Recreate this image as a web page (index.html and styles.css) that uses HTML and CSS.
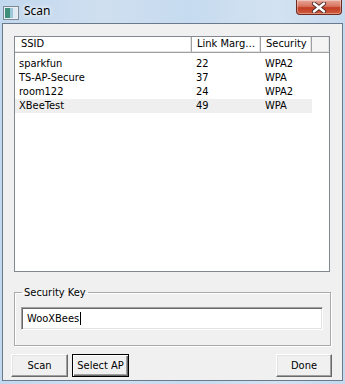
FILE: index.html
```html
<!DOCTYPE html>
<html>
<head>
<meta charset="utf-8">
<link rel="stylesheet" href="styles.css">
</head>
<body>
<div class="window">
  <div class="titlebar">
    <svg class="app-icon" width="16" height="14" viewBox="0 0 16 14">
      <rect x="0.5" y="0.5" width="15" height="13" fill="#e8eef4" stroke="#7d8a96"/>
      <rect x="2" y="2" width="5" height="10" fill="#3f8f7a"/>
      <rect x="7" y="2" width="3" height="10" fill="#9cc7d8"/>
      <rect x="10" y="2" width="4" height="10" fill="#dfe9f2"/>
    </svg>
    <span class="title">Scan</span>
    <div class="close">
      <svg width="16" height="11" viewBox="0 0 16 11">
        <path d="M3 1.5 L13 9.5 M13 1.5 L3 9.5" stroke="#4a2a26" stroke-width="4.2" stroke-linecap="round"/>
        <path d="M3 1.5 L13 9.5 M13 1.5 L3 9.5" stroke="#ffffff" stroke-width="2.4" stroke-linecap="round"/>
      </svg>
    </div>
  </div>
  <div class="client">
    <div class="list">
      <div class="row header">
        <div class="hcell c1">SSID</div>
        <div class="hcell c2">Link Marg…</div>
        <div class="hcell c3">Security</div>
        <div class="hcell c4"></div>
      </div>
      <div class="rows">
        <div class="row item"><span class="cell c1">sparkfun</span><span class="cell c2">22</span><span class="cell c3">WPA2</span></div>
        <div class="row item"><span class="cell c1">TS-AP-Secure</span><span class="cell c2">37</span><span class="cell c3">WPA</span></div>
        <div class="row item"><span class="cell c1">room122</span><span class="cell c2">24</span><span class="cell c3">WPA2</span></div>
        <div class="row item selected"><span class="cell c1">XBeeTest</span><span class="cell c2">49</span><span class="cell c3">WPA</span></div>
      </div>
    </div>
    <fieldset class="group">
      <legend>Security Key</legend>
      <div class="input"><span class="value">WooXBees</span><span class="caret"></span></div>
    </fieldset>
    <div class="buttons">
      <button class="btn">Scan</button>
      <button class="btn default">Select AP</button>
      <span class="spacer"></span>
      <button class="btn done">Done</button>
    </div>
  </div>
</div>
</body>
</html>
```

FILE: styles.css
```css
* { box-sizing: border-box; }
html, body { margin: 0; padding: 0; }
body { width: 345px; height: 384px; overflow: hidden; background: #bad2ea; }

.window {
  width: 345px;
  height: 384px;
  display: flex;
  flex-direction: column;
  background: linear-gradient(90deg, #c2d8ee 0%, #cfdff0 30%, #c6dbef 55%, #d3e2f1 80%, #c4d9ee 100%);
  font-family: "DejaVu Sans Condensed", "DejaVu Sans", sans-serif;
  font-stretch: condensed;
  font-size: 11px;
  color: #000;
}

.titlebar {
  height: 23px;
  display: flex;
  align-items: flex-start;
  position: relative;
}
.app-icon { margin: 6px 0 0 3px; flex: none; }
.title {
  margin: 3px 0 0 5px;
  font-family: "Noto Sans", "Open Sans", sans-serif;
  font-stretch: normal;
  font-size: 12px;
  line-height: 15px;
  color: #000;
  text-shadow: 0 0 6px #fff, 0 0 4px #fff;
}
.close {
  margin-left: auto;
  margin-right: 3px;
  width: 46px;
  height: 15px;
  border: 1px solid #6f2a20;
  border-top: none;
  border-radius: 0 0 4px 4px;
  background: linear-gradient(180deg, #e7a899 0%, #d8745f 45%, #c23e25 55%, #cf5a3c 100%);
  box-shadow: inset 0 0 0 1px rgba(255,255,255,0.35);
  display: flex;
  align-items: center;
  justify-content: center;
}

.client {
  flex: 1;
  margin: 0 2px 3px 2px;
  border: 1px solid #6a7a8c;
  background: #f0f0f0;
  display: flex;
  flex-direction: column;
}

.list {
  margin: 12px 12px 0 11px;
  height: 236px;
  border: 1px solid #828790;
  background: #fff;
}
.row { display: flex; }
.c1 { width: 177px; }
.c2 { width: 69px; }
.c3 { width: 51px; }
.c4 { flex: 1; }

.header { height: 16px; }
.hcell {
  height: 16px;
  line-height: 14px;
  background: #fff;
  border-right: 1px solid #a0a0a0;
  border-bottom: 1px solid #a0a0a0;
  box-shadow: inset -1px -1px 0 #e3e3e3;
  white-space: nowrap;
  overflow: hidden;
}
.hcell.c1 { padding-left: 6px; }
.hcell.c2 { padding-left: 5px; }
.hcell.c3 { padding-left: 5px; }
.hcell.c4 { border-right: none; background: #f4f4f4; }

.rows { padding-top: 4px; }
.item { height: 14px; line-height: 14px; width: 297px; }
.item.selected { background: #efefef; }
.cell { padding-left: 4px; white-space: nowrap; }

.group {
  margin: 14px 11px 0 11px;
  padding: 0 0 0 6px;
  height: 60px;
  border: 1px solid #a9a9a9;
  box-shadow: inset 1px 1px 0 #fff, 1px 1px 0 #fff;
  min-width: 0;
}
.group legend {
  padding: 0 2px;
  margin-left: 1px;
  line-height: 13px;
}
.input {
  margin-top: 8px;
  width: 302px;
  height: 23px;
  background: #fff;
  border-top: 1px solid #a0a0a0;
  border-left: 1px solid #a0a0a0;
  border-right: 1px solid #fff;
  border-bottom: 1px solid #fff;
  box-shadow: inset 1px 1px 0 #696969, inset -1px -1px 0 #e3e3e3;
  display: flex;
  align-items: center;
  padding-left: 5px;
}
.caret { width: 1px; height: 13px; background: #000; margin-left: 1px; }

.buttons {
  display: flex;
  margin: 8px 10px 0 8px;
}
.spacer { flex: 1; }
.btn {
  width: 57px;
  height: 23px;
  margin: 0 4px 0 0;
  padding: 0;
  font: inherit;
  font-stretch: condensed;
  color: #000;
  background: #f0f0f0;
  border-top: 1px solid #fff;
  border-left: 1px solid #fff;
  border-right: 1px solid #696969;
  border-bottom: 1px solid #696969;
  box-shadow: inset -1px -1px 0 #a0a0a0, inset 1px 1px 0 #e3e3e3;
}
.btn.default {
  border: 1px solid #000;
  box-shadow: inset 1px 1px 0 #fff, inset -1px -1px 0 #696969, inset -2px -2px 0 #a0a0a0;
}
.btn.done { width: 56px; margin: 0; }
```
